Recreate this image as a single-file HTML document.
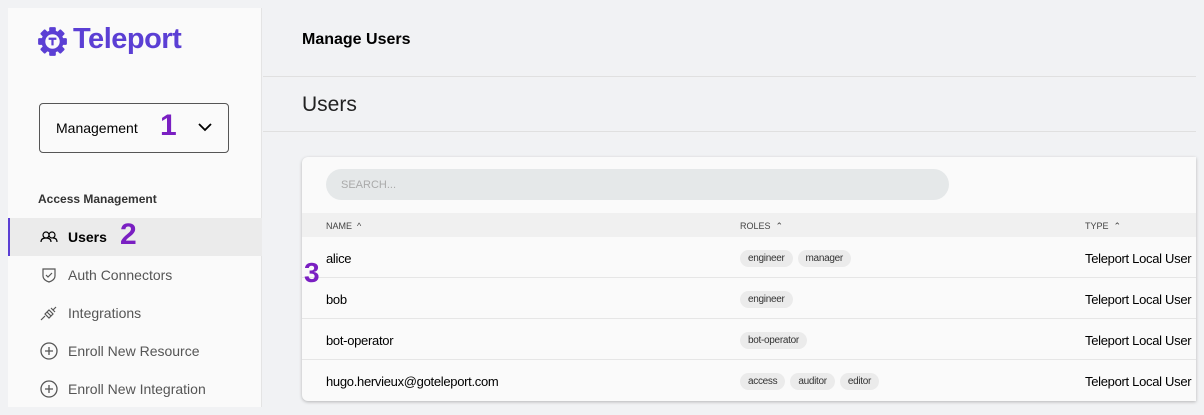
<!DOCTYPE html>
<html><head><meta charset="utf-8"><style>
*{margin:0;padding:0;box-sizing:border-box}
body{width:1204px;height:415px;overflow:hidden;background:#f1f2f4;font-family:"Liberation Sans",sans-serif;position:relative;color:#000}
.a{position:absolute;white-space:nowrap}
#side{position:absolute;left:8px;top:8px;width:254px;height:399px;background:#fafafa;border-right:1px solid #e4e4e4}
.nav{position:absolute;left:0;width:254px;height:38px;font-size:14px;color:#555;display:flex;align-items:center;padding-left:32px}
.nav svg{margin-right:10px}
.num{position:absolute;color:#7a1fc2;font-weight:bold;font-size:30px}
.tag{display:inline-block;background:#ebebeb;border-radius:10px;font-size:10px;padding:3px 8px;margin-right:5px;color:#333;font-style:normal}
.row{position:absolute;left:0;width:894px;height:41px;border-bottom:1px solid #e6e6e6;font-size:13px;letter-spacing:-0.3px}
.row span{position:absolute;top:14px}
</style></head><body>
<div id="side">
 <svg class="a" style="left:29px;top:18px" width="31" height="31" viewBox="0 0 28 28"><g fill="#5b3fd4"><circle cx="14" cy="14" r="10"/><rect x="11" y="1" width="6" height="26" rx="1"/><rect x="1" y="11" width="26" height="6" rx="1"/><rect x="11" y="1" width="6" height="26" rx="1" transform="rotate(45 14 14)"/><rect x="11" y="1" width="6" height="26" rx="1" transform="rotate(-45 14 14)"/></g><circle cx="14" cy="14" r="6.5" fill="#fafafa"/><path d="M10.5 11.5h7M14 11.5v6" stroke="#5b3fd4" stroke-width="2"/></svg>
 <div class="a" style="left:65px;top:15px;font-size:29px;font-weight:bold;color:#5b3fd4;letter-spacing:-0.5px">Teleport</div>
 <div class="a" style="left:31px;top:95px;width:190px;height:50px;border:1px solid #555;border-radius:4px"></div>
 <div class="a" style="left:48px;top:112px;font-size:14px">Management</div>
 <div class="num" style="left:152px;top:101px">1</div>
 <svg class="a" style="left:190px;top:114px" width="14" height="10" viewBox="0 0 14 10"><path d="M1 2l6 6 6-6" stroke="#000" stroke-width="1.8" fill="none"/></svg>
 <div class="a" style="left:30px;top:184px;font-size:12px;font-weight:bold;color:#333">Access Management</div>
 <div class="nav" style="top:210px;background:#ebebeb;border-left:2px solid #5b3fd4;padding-left:30px;color:#000;font-weight:bold">
  <svg width="18" height="14" viewBox="0 0 18 14"><g fill="none" stroke="#000" stroke-width="1.2"><circle cx="6" cy="5" r="3"/><path d="M1 12c0-3 2-4 5-4s5 1 5 4"/><circle cx="12" cy="5" r="3"/><path d="M13 8c2.5 0 4 1.5 4 4"/></g></svg>Users</div>
 <div class="num" style="left:112px;top:210px">2</div>
 <div class="nav" style="top:248px"><svg width="18" height="16" viewBox="0 0 18 16"><path d="M3 2h12v7c0 3-3 5-6 6-3-1-6-3-6-6z M6 8l2 2 4-4" fill="none" stroke="#555" stroke-width="1.2"/></svg>Auth Connectors</div>
 <div class="nav" style="top:286px"><svg width="18" height="16" viewBox="0 0 18 16"><path d="M1 15l4-4M7 7l4 4M5 9l4-4 4 4-4 4zM13 5l3-3M11 3l2 2M15 7l-2-2" fill="none" stroke="#555" stroke-width="1.2"/></svg>Integrations</div>
 <div class="nav" style="top:324px"><svg width="18" height="18" viewBox="0 0 18 18"><circle cx="9" cy="9" r="8" fill="none" stroke="#555" stroke-width="1.3"/><path d="M9 5v8M5 9h8" stroke="#555" stroke-width="1.3"/></svg>Enroll New Resource</div>
 <div class="nav" style="top:362px"><svg width="18" height="18" viewBox="0 0 18 18"><circle cx="9" cy="9" r="8" fill="none" stroke="#555" stroke-width="1.3"/><path d="M9 5v8M5 9h8" stroke="#555" stroke-width="1.3"/></svg>Enroll New Integration</div>
</div>
<div class="a" style="left:302px;top:31px;font-size:16px;font-weight:bold">Manage Users</div>
<div class="a" style="left:263px;top:76px;width:933px;height:1px;background:#e0e0e0"></div>
<div class="a" style="left:302px;top:93px;font-size:21px;color:#222">Users</div>
<div class="a" style="left:263px;top:131px;width:933px;height:1px;background:#e0e0e0"></div>
<div class="a" style="left:302px;top:157px;width:894px;height:244px;background:#fafafa;border-radius:6px 0 0 6px;box-shadow:0 1px 3px rgba(0,0,0,.25);overflow:hidden">
 <div class="a" style="left:24px;top:12px;width:623px;height:31px;background:#e5e8e9;border-radius:16px;font-size:11px;color:#aaa;padding:10px 0 0 15px">SEARCH...</div>
 <div class="a" style="left:0;top:56px;width:894px;height:24px;background:#f0f0f0;font-size:9px;color:#444">
  <span class="a" style="left:24px;top:8px">NAME &nbsp;^</span>
  <span class="a" style="left:438px;top:8px">ROLES &nbsp;⌃</span>
  <span class="a" style="left:783px;top:8px">TYPE &nbsp;⌃</span>
 </div>
 <div class="row" style="top:80px"><span style="left:24px">alice</span><span style="left:438px;top:12px"><i class="tag">engineer</i><i class="tag">manager</i></span><span style="left:783px">Teleport Local User</span></div>
 <div class="row" style="top:121px"><span style="left:24px">bob</span><span style="left:438px;top:12px"><i class="tag">engineer</i></span><span style="left:783px">Teleport Local User</span></div>
 <div class="row" style="top:162px"><span style="left:24px">bot-operator</span><span style="left:438px;top:12px"><i class="tag">bot-operator</i></span><span style="left:783px">Teleport Local User</span></div>
 <div class="row" style="top:203px;border:none"><span style="left:24px">hugo.hervieux@goteleport.com</span><span style="left:438px;top:12px"><i class="tag">access</i><i class="tag">auditor</i><i class="tag">editor</i></span><span style="left:783px">Teleport Local User</span></div>
</div>
<div class="num" style="left:304px;top:257px;font-size:28px">3</div>
</body></html>
